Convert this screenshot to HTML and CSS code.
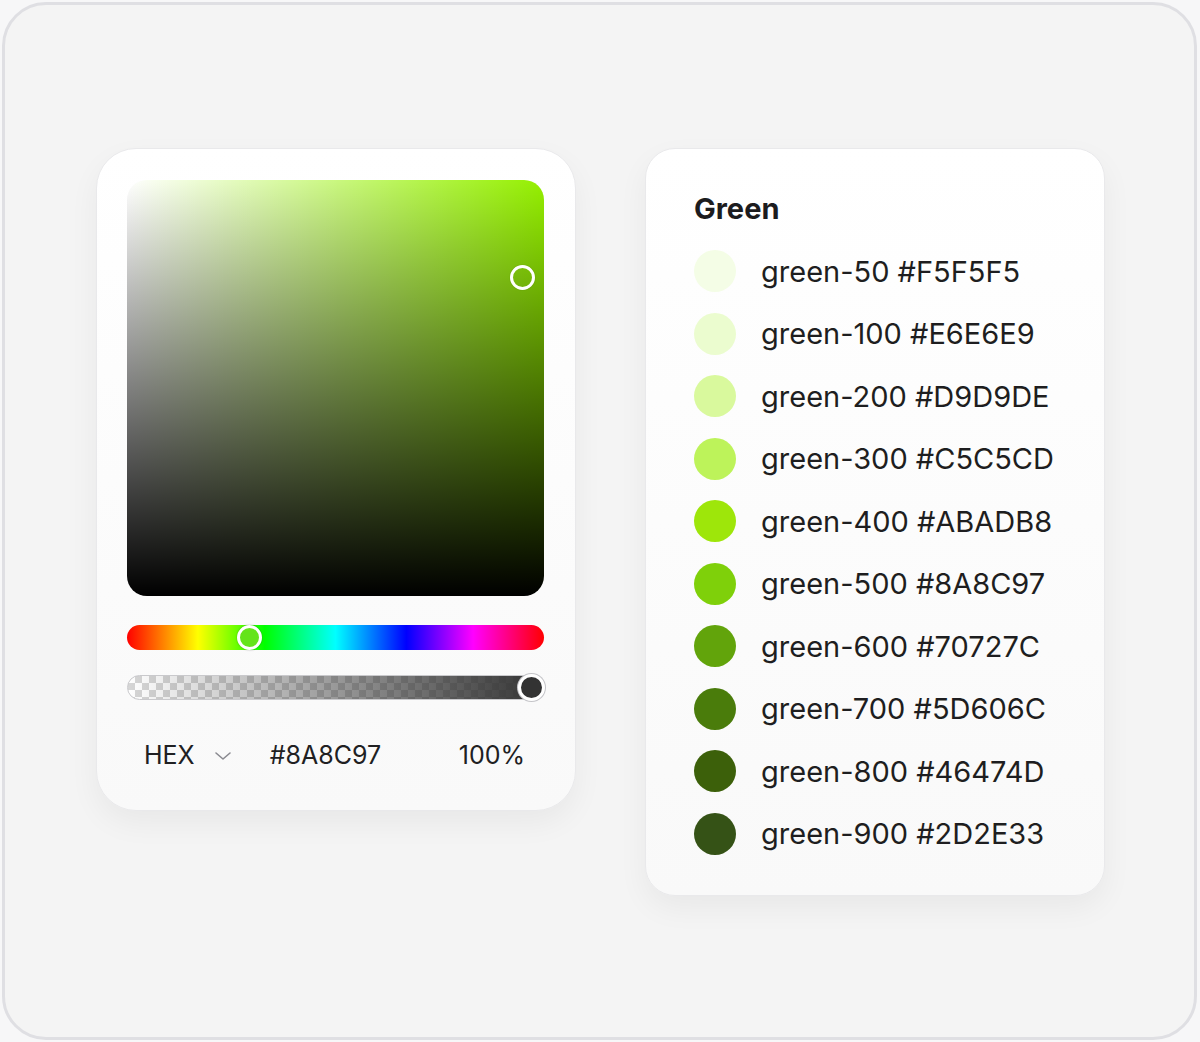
FILE: index.html
```html
<!DOCTYPE html>
<html lang="en">
<head>
<meta charset="utf-8">
<title>Color picker</title>
<link rel="stylesheet" href="styles.css">
</head>
<body>
<div class="frame">
  <div class="picker card">
    <div class="sv">
      <span class="sv-handle"></span>
    </div>
    <div class="hue">
      <span class="hue-handle"></span>
    </div>
    <div class="alpha">
      <div class="alpha-fill"></div>
      <span class="alpha-handle"></span>
    </div>
    <div class="values">
      <span class="mode">HEX</span>
      <svg class="chev" width="18" height="10" viewBox="0 0 18 10"><path d="M2 2 L9 8 L16 2" fill="none" stroke="#8a8a90" stroke-width="1.6" stroke-linecap="round" stroke-linejoin="round"/></svg>
      <span class="hexval">#8A8C97</span>
      <span class="pct">100%</span>
    </div>
  </div>

  <div class="palette card">
    <h2 class="title">Green</h2>
    <ul class="list">
      <li class="row"><span class="dot c50"></span>green-50 #F5F5F5</li>
      <li class="row"><span class="dot c100"></span>green-100 #E6E6E9</li>
      <li class="row"><span class="dot c200"></span>green-200 #D9D9DE</li>
      <li class="row"><span class="dot c300"></span>green-300 #C5C5CD</li>
      <li class="row"><span class="dot c400"></span>green-400 #ABADB8</li>
      <li class="row"><span class="dot c500"></span>green-500 #8A8C97</li>
      <li class="row"><span class="dot c600"></span>green-600 #70727C</li>
      <li class="row"><span class="dot c700"></span>green-700 #5D606C</li>
      <li class="row"><span class="dot c800"></span>green-800 #46474D</li>
      <li class="row"><span class="dot c900"></span>green-900 #2D2E33</li>
    </ul>
  </div>
</div>
</body>
</html>
```

FILE: styles.css
```css
* { box-sizing: border-box; }
html, body {
  margin: 0;
  padding: 0;
  background: #f7f7f8;
  font-family: Inter, "Noto Sans", "Liberation Sans", sans-serif;
  color: #1e1e20;
}
.frame {
  margin: 2px;
  width: 1195px;
  height: 1038px;
  border: 3px solid #dfdfe3;
  border-radius: 44px;
  background: #f4f4f4;
  display: flex;
  align-items: flex-start;
  gap: 69px;
  padding: 143px 0 0 91px;
}
.card {
  background: linear-gradient(#ffffff, #f9f9f9);
  border: 1px solid #e9e9eb;
  box-shadow: 0 12px 30px rgba(0, 0, 0, 0.05);
}
.picker {
  width: 480px;
  height: 663px;
  border-radius: 40px;
  padding: 31px 31px 0 30px;
  display: flex;
  flex-direction: column;
}
.sv {
  position: relative;
  width: 417px;
  height: 416px;
  border-radius: 20px;
  background:
    linear-gradient(to top, #000 0%, rgba(0,0,0,0) 100%),
    linear-gradient(to right, #fff 0%, rgba(255,255,255,0) 100%),
    #95f000;
}
.sv-handle {
  position: absolute;
  left: 383px;
  top: 85px;
  width: 25px;
  height: 25px;
  border-radius: 50%;
  border: 3px solid #fff;
  box-shadow: 0 0 1px rgba(0,0,0,0.3);
}
.hue {
  position: relative;
  margin-top: 29px;
  width: 417px;
  height: 25px;
  border-radius: 13px;
  background: linear-gradient(to right, #ff0000 0%, #ffff00 17%, #00ff00 33%, #00ffff 50%, #0000ff 67%, #ff00ff 83%, #ff0000 100%);
}
.hue-handle {
  position: absolute;
  left: 110px;
  top: 0;
  width: 25px;
  height: 25px;
  border-radius: 50%;
  border: 3px solid #fff;
  background: #64e41a;
  box-shadow: 0 0 2px rgba(0,0,0,0.3);
}
.alpha {
  position: relative;
  margin-top: 25px;
  width: 417px;
  height: 25px;
  border-radius: 13px;
  border: 1px solid #c9c9cc;
  background-color: #fff;
  background-image:
    linear-gradient(45deg, #d6d6d6 25%, transparent 25%, transparent 75%, #d6d6d6 75%),
    linear-gradient(45deg, #d6d6d6 25%, transparent 25%, transparent 75%, #d6d6d6 75%);
  background-size: 14px 14px;
  background-position: 0 0, 7px 7px;
}
.alpha-fill {
  height: 100%;
  border-radius: 12px;
  background: linear-gradient(to right, rgba(51,51,51,0) 0%, #333 100%);
}
.alpha-handle {
  position: absolute;
  right: -2px;
  top: -2px;
  width: 27px;
  height: 27px;
  border-radius: 50%;
  background: #333;
  border: 3px solid #fff;
  box-shadow: 0 0 0 1px #c4c4c8;
}
.values {
  display: flex;
  align-items: center;
  margin-top: 40px;
  padding: 0 19px 0 17px;
  font-size: 25px;
  line-height: 30px;
  color: #202022;
}
.chev { margin-left: 19px; margin-top: 2px; }
.hexval { margin-left: 38px; }
.pct { margin-left: auto; }

.palette {
  width: 460px;
  height: 748px;
  border-radius: 30px;
  padding: 43px 0 0 48px;
}
.title {
  margin: 0;
  font-size: 29px;
  line-height: 34px;
  font-weight: 700;
  color: #1c1c1e;
}
.list {
  list-style: none;
  margin: 14px 0 0;
  padding: 0;
}
.row {
  display: flex;
  align-items: center;
  height: 62.5px;
  font-size: 29px;
  color: #1e1e20;
}
.dot {
  width: 42px;
  height: 42px;
  border-radius: 50%;
  margin-right: 25px;
  flex: none;
}
.c50 { background: #f4fde6; }
.c100 { background: #ebfccf; }
.c200 { background: #d9f99d; }
.c300 { background: #bdf35a; }
.c400 { background: #9ee60a; }
.c500 { background: #7fd00a; }
.c600 { background: #62a40b; }
.c700 { background: #4a7c0b; }
.c800 { background: #3c600a; }
.c900 { background: #355216; }
```
